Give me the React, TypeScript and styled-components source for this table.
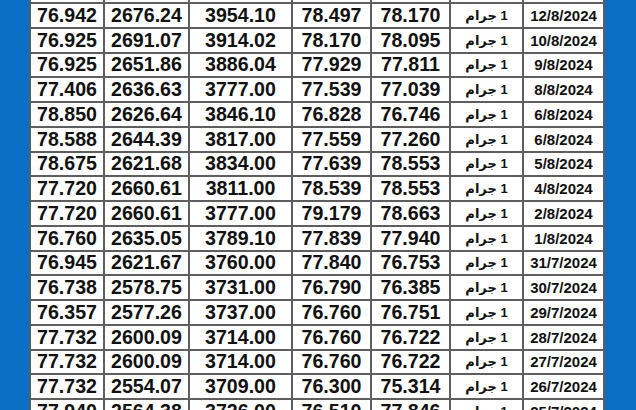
import React from "react";
import styled, { createGlobalStyle } from "styled-components";

const Global = createGlobalStyle`
  html, body { margin: 0; padding: 0; background: #0a6ec4; }
  body { font-family: "Liberation Sans", Arial, sans-serif; }
`;

const Page = styled.div`
  width: 636px;
  height: 410px;
  overflow: hidden;
  background: #0a6ec4;
  padding-left: 29px;
  box-sizing: border-box;
`;

const Grid = styled.div`
  display: grid;
  grid-template-columns: 72px 83px 101px 77px 77px 71px 79px;
  grid-auto-rows: 22.75px;
  gap: 2px;
  padding: 2px;
  background: #5e5e5e;
  width: max-content;
  margin-top: -22.75px;
`;

const Cell = styled.div<{ $kind?: "num" | "unit" | "date" }>`
  background: #ffffff;
  display: flex;
  align-items: center;
  justify-content: center;
  color: #111;
  font-weight: bold;
  white-space: nowrap;
  font-size: ${(p) => (p.$kind === "date" ? "15px" : p.$kind === "unit" ? "13px" : "19.6px")};
  direction: ${(p) => (p.$kind === "unit" ? "rtl" : "ltr")};
  font-family: ${(p) =>
    p.$kind === "unit" ? '"Liberation Sans", "DejaVu Sans", sans-serif' : '"Liberation Sans", Arial, sans-serif'};
`;

const rows: [string, string, string, string, string, string][] = [
  ["76.942", "2676.24", "3954.10", "78.497", "78.170", "12/8/2024"],
  ["76.925", "2691.07", "3914.02", "78.170", "78.095", "10/8/2024"],
  ["76.925", "2651.86", "3886.04", "77.929", "77.811", "9/8/2024"],
  ["77.406", "2636.63", "3777.00", "77.539", "77.039", "8/8/2024"],
  ["78.850", "2626.64", "3846.10", "76.828", "76.746", "6/8/2024"],
  ["78.588", "2644.39", "3817.00", "77.559", "77.260", "6/8/2024"],
  ["78.675", "2621.68", "3834.00", "77.639", "78.553", "5/8/2024"],
  ["77.720", "2660.61", "3811.00", "78.539", "78.553", "4/8/2024"],
  ["77.720", "2660.61", "3777.00", "79.179", "78.663", "2/8/2024"],
  ["76.760", "2635.05", "3789.10", "77.839", "77.940", "1/8/2024"],
  ["76.945", "2621.67", "3760.00", "77.840", "76.753", "31/7/2024"],
  ["76.738", "2578.75", "3731.00", "76.790", "76.385", "30/7/2024"],
  ["76.357", "2577.26", "3737.00", "76.760", "76.751", "29/7/2024"],
  ["77.732", "2600.09", "3714.00", "76.760", "76.722", "28/7/2024"],
  ["77.732", "2600.09", "3714.00", "76.760", "76.722", "27/7/2024"],
  ["77.732", "2554.07", "3709.00", "76.300", "75.314", "26/7/2024"],
  ["77.940", "2564.38", "3726.00", "76.510", "77.846", "25/7/2024"],
];

export default function App() {
  return (
    <>
      <Global />
      <Page>
        <Grid>
          {Array.from({ length: 7 }).map((_, i) => (
            <Cell key={"h" + i} />
          ))}
          {rows.map((r, i) => (
            <React.Fragment key={i}>
              <Cell $kind="num">{r[0]}</Cell>
              <Cell $kind="num">{r[1]}</Cell>
              <Cell $kind="num">{r[2]}</Cell>
              <Cell $kind="num">{r[3]}</Cell>
              <Cell $kind="num">{r[4]}</Cell>
              <Cell $kind="unit">1 جرام</Cell>
              <Cell $kind="date">{r[5]}</Cell>
            </React.Fragment>
          ))}
        </Grid>
      </Page>
    </>
  );
}
